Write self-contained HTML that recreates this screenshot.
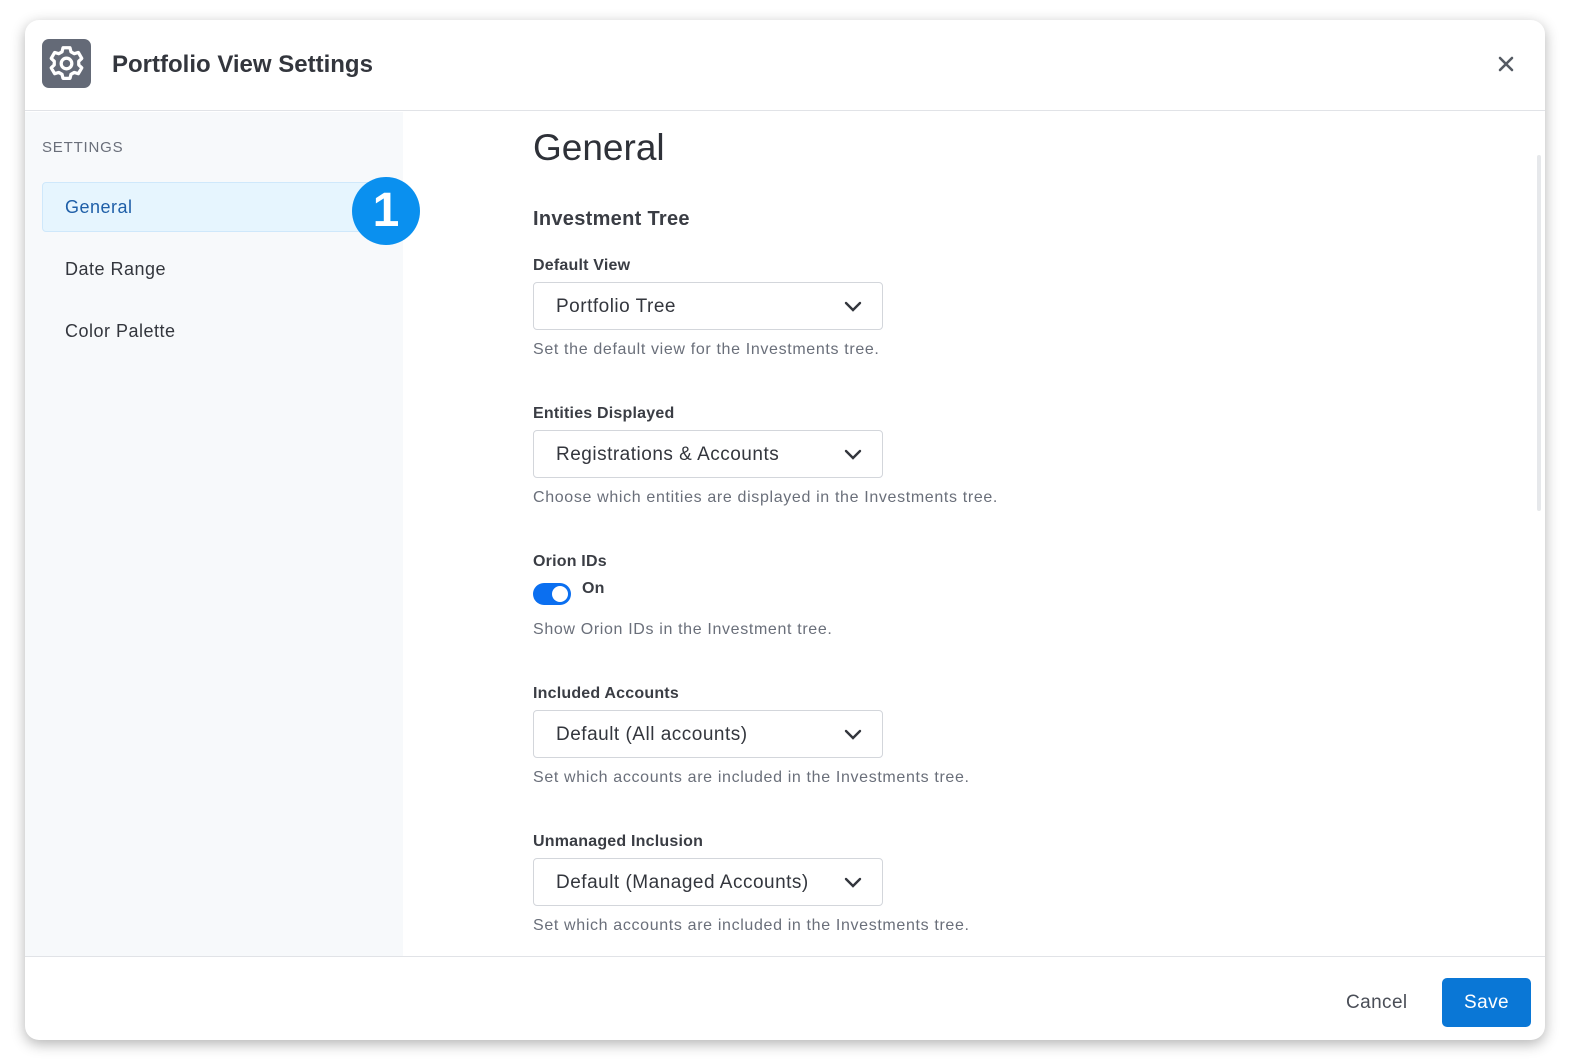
<!DOCTYPE html>
<html><head><style>
*{box-sizing:border-box;margin:0;padding:0}
body{width:1572px;height:1064px;background:#fff;font-family:"Liberation Sans",sans-serif;position:relative;overflow:hidden;color:#2c2f36}
.modal{position:absolute;left:25px;top:20px;width:1520px;height:1020px;background:#fff;border-radius:14px;box-shadow:0 4px 14px rgba(0,0,0,.3);overflow:hidden}
.hdr{position:absolute;left:0;top:0;right:0;height:91px;border-bottom:1px solid #e1e3e7}
.gear{position:absolute;left:17px;top:19px;width:49px;height:49px;border-radius:7px;background:#646a77}
.title{position:absolute;left:87px;top:31px;font-size:24px;font-weight:bold;color:#33363d}
.x{position:absolute;left:1470px;top:33px}
.side{position:absolute;left:0;top:92px;width:378px;height:844px;background:#f7f9fb}
.sl{position:absolute;left:17px;top:119px;font-size:15px;color:#6a6f7a;letter-spacing:.8px}
.item{position:absolute;left:40px;font-size:18px;color:#33363d;letter-spacing:.5px}
.act{position:absolute;left:17px;top:162px;width:340px;height:50px;background:#e6f5fe;border:1px solid #cfe8fb;border-radius:4px}
.badge{position:absolute;left:327px;top:157px;width:68px;height:68px;border-radius:50%;background:#0a90ef;color:#fff;font-size:48px;font-weight:bold;text-align:center;line-height:68px}
.c{position:absolute;left:508px}
.lab{font-size:16px;font-weight:bold;color:#3a3d44;letter-spacing:.2px}
.sel{width:350px;height:48px;border:1px solid #d3d6db;border-radius:4px;font-size:19px;padding:0 22px;line-height:48px;color:#33363d;letter-spacing:.5px}
.sel svg{position:absolute;right:20px;top:18px}
.help{font-size:16px;color:#6a6f7a;letter-spacing:.65px}
.foot{position:absolute;left:0;right:0;top:936px;border-top:1px solid #e1e3e7}
</style></head><body>
<div class="modal">
<div class="hdr">
<div class="gear"><svg width="49" height="49" viewBox="0 0 24 24" fill="none" stroke="#fff" stroke-width="1.6"><circle cx="12" cy="12" r="2.6"/><path d="M10.3 4.3h3.4l.5 2 1.6.9 2-.6 1.7 2.9-1.5 1.4v1.8l1.5 1.4-1.7 2.9-2-.6-1.6.9-.5 2h-3.4l-.5-2-1.6-.9-2 .6-1.7-2.9 1.5-1.4v-1.8L4.5 9.5l1.7-2.9 2 .6 1.6-.9z" stroke-linejoin="round"/></svg></div>
<div class="title">Portfolio View Settings</div>
<svg class="x" width="22" height="22" viewBox="0 0 22 22" stroke="#555a63" stroke-width="2.6" stroke-linecap="round"><path d="M5 5l12 12M17 5L5 17"/></svg>
</div>
<div class="side"></div>
<div class="sl">SETTINGS</div>
<div class="act"></div>
<div class="item" style="top:177px;color:#1f5fa8">General</div>
<div class="item" style="top:239px">Date Range</div>
<div class="item" style="top:301px">Color Palette</div>
<div class="badge">1</div>
<div style="position:absolute;left:1512px;top:135px;width:4px;height:356px;background:#e6e8eb;border-radius:2px"></div>

<div class="c" style="top:107px;font-size:37px;color:#2e3138">General</div>
<div class="c" style="top:188px;font-size:20px;font-weight:bold;color:#3a3d44;letter-spacing:.3px">Investment Tree</div>

<div class="c lab" style="top:237px">Default View</div>
<div class="c sel" style="top:262px">Portfolio Tree<svg width="18" height="11" viewBox="0 0 18 11" fill="none" stroke="#33363d" stroke-width="2.4" stroke-linecap="round"><path d="M2 2l7 7 7-7"/></svg></div>
<div class="c help" style="top:321px">Set the default view for the Investments tree.</div>

<div class="c lab" style="top:385px">Entities Displayed</div>
<div class="c sel" style="top:410px">Registrations &amp; Accounts<svg width="18" height="11" viewBox="0 0 18 11" fill="none" stroke="#33363d" stroke-width="2.4" stroke-linecap="round"><path d="M2 2l7 7 7-7"/></svg></div>
<div class="c help" style="top:469px">Choose which entities are displayed in the Investments tree.</div>

<div class="c lab" style="top:533px">Orion IDs</div>
<div class="c" style="top:563px;width:38px;height:22px;border-radius:11px;background:#0b6ff0"><div style="position:absolute;right:3px;top:3px;width:16px;height:16px;border-radius:50%;background:#fff"></div></div>
<div class="c lab" style="top:560px;left:557px">On</div>
<div class="c help" style="top:601px">Show Orion IDs in the Investment tree.</div>

<div class="c lab" style="top:665px">Included Accounts</div>
<div class="c sel" style="top:690px">Default (All accounts)<svg width="18" height="11" viewBox="0 0 18 11" fill="none" stroke="#33363d" stroke-width="2.4" stroke-linecap="round"><path d="M2 2l7 7 7-7"/></svg></div>
<div class="c help" style="top:749px">Set which accounts are included in the Investments tree.</div>

<div class="c lab" style="top:813px">Unmanaged Inclusion</div>
<div class="c sel" style="top:838px">Default (Managed Accounts)<svg width="18" height="11" viewBox="0 0 18 11" fill="none" stroke="#33363d" stroke-width="2.4" stroke-linecap="round"><path d="M2 2l7 7 7-7"/></svg></div>
<div class="c help" style="top:897px">Set which accounts are included in the Investments tree.</div>

<div class="foot"></div>
<div style="position:absolute;left:1321px;top:972px;font-size:19px;color:#4a4e57;letter-spacing:.4px">Cancel</div>
<div style="position:absolute;left:1417px;top:958px;width:89px;height:49px;background:#0a77d6;border-radius:5px;color:#fff;font-size:19px;text-align:center;line-height:49px;letter-spacing:.4px">Save</div>
</div>
</body></html>
